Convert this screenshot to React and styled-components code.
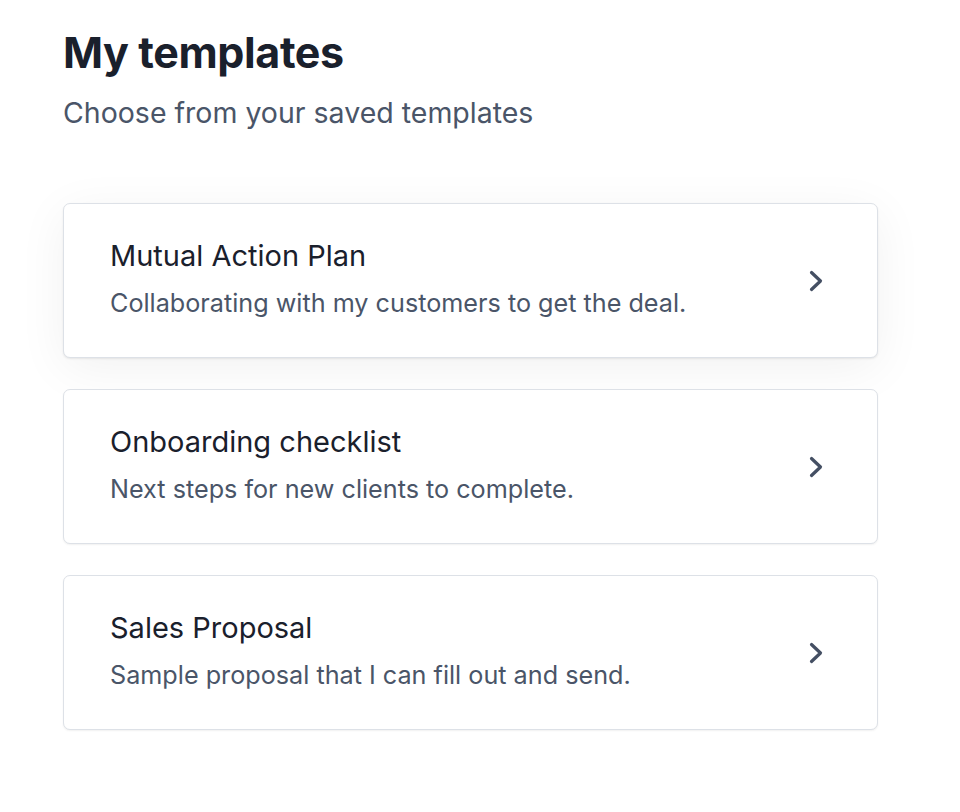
import styled, { createGlobalStyle } from "styled-components";

const GlobalStyle = createGlobalStyle`
    body {
        margin: 0;
        background: #fff;
        font-family: Inter, "Liberation Sans", sans-serif;
        -webkit-font-smoothing: antialiased;
    }
`;

const templates = [
    { title: "Mutual Action Plan", description: "Collaborating with my customers to get the deal.", raised: true },
    { title: "Onboarding checklist", description: "Next steps for new clients to complete." },
    { title: "Sales Proposal", description: "Sample proposal that I can fill out and send." },
];

function Chevron() {
    return (
        <svg width="16" height="22" viewBox="0 0 16 22" fill="none">
            <path d="M3.5 2.5L12.5 11L3.5 19.5" stroke="#444f63" strokeWidth="3.2" strokeLinecap="round" strokeLinejoin="round" />
        </svg>
    );
}

export default function App() {
    return (
        <Page>
            <GlobalStyle />
            <Header>
                <Title>My templates</Title>
                <Subtitle>Choose from your saved templates</Subtitle>
            </Header>
            <List>
                {templates.map(t => (
                    <Card key={t.title} $raised={t.raised}>
                        <CardText>
                            <CardTitle>{t.title}</CardTitle>
                            <CardDescription>{t.description}</CardDescription>
                        </CardText>
                        <Chevron />
                    </Card>
                ))}
            </List>
        </Page>
    );
}

const Page = styled.div`
    padding: 26px 0 40px 63px;
    width: 815px;
`;

const Header = styled.div`
    display: flex;
    flex-direction: column;
    gap: 17px;
    margin-bottom: 72px;
`;

const Title = styled.h1`
    margin: 0;
    font-size: 43px;
    line-height: 52px;
    font-weight: 700;
    color: #1a202c;
    letter-spacing: -0.4px;
`;

const Subtitle = styled.p`
    margin: 0;
    font-size: 28.5px;
    line-height: 36px;
    color: #4a5568;
`;

const List = styled.div`
    display: flex;
    flex-direction: column;
    gap: 31px;
`;

const Card = styled.div`
    box-sizing: border-box;
    height: 155px;
    display: flex;
    align-items: center;
    justify-content: space-between;
    padding: 0 53px 0 46px;
    background: #fff;
    border: 1px solid #dde1e7;
    border-radius: 7px;
    box-shadow: ${p => p.$raised
        ? "0 1px 2px rgba(0,0,0,0.08), 0 10px 50px rgba(0,0,0,0.06)"
        : "0 1px 2px rgba(0,0,0,0.06)"};
    cursor: pointer;
`;

const CardText = styled.div`
    display: flex;
    flex-direction: column;
    gap: 13px;
    padding-bottom: 4px;
`;

const CardTitle = styled.div`
    font-size: 29px;
    line-height: 36px;
    color: #1a202c;
`;

const CardDescription = styled.div`
    font-size: 25.2px;
    line-height: 32px;
    color: #4a5568;
`;
